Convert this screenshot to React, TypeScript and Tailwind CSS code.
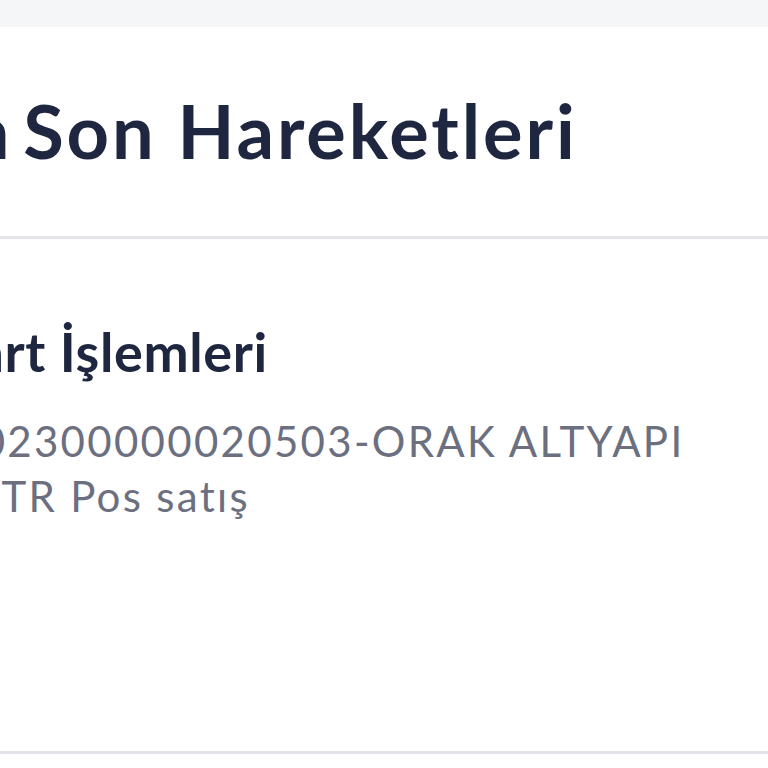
export default function App() {
  return (
    <div className="w-[768px] h-[768px] overflow-hidden bg-white font-['Lato',sans-serif]">
      <div className="h-[27px] bg-[#f5f6f8]" />

      <section className="pt-[67px] pb-[68px] border-b-[3px] border-[#e3e4e9]">
        <h1 className="ml-[-209px] whitespace-nowrap text-[74px] leading-none font-bold tracking-[2.9px] text-[#1f2640]">
          <span className="mr-[-10px]">Kartın</span> Son Hareketleri
        </h1>
      </section>

      <section className="pt-[86px] h-[515px] border-b-[3px] border-[#e3e4e9]">
        <h2 className="ml-[-61px] whitespace-nowrap text-[54px] leading-none font-bold tracking-[0.6px] text-[#1f2640]">
          Kart İşlemleri
        </h2>
        <div className="mt-[35px] text-[42px] leading-[55px] tracking-[2.3px] text-[#6b6f80] whitespace-nowrap">
          <p className="ml-[-126px]">520902300000020503-ORAK ALTYAPI</p>
          <p className="ml-[-224px]">İSTANBUL TR Pos satış</p>
        </div>
      </section>
    </div>
  );
}
